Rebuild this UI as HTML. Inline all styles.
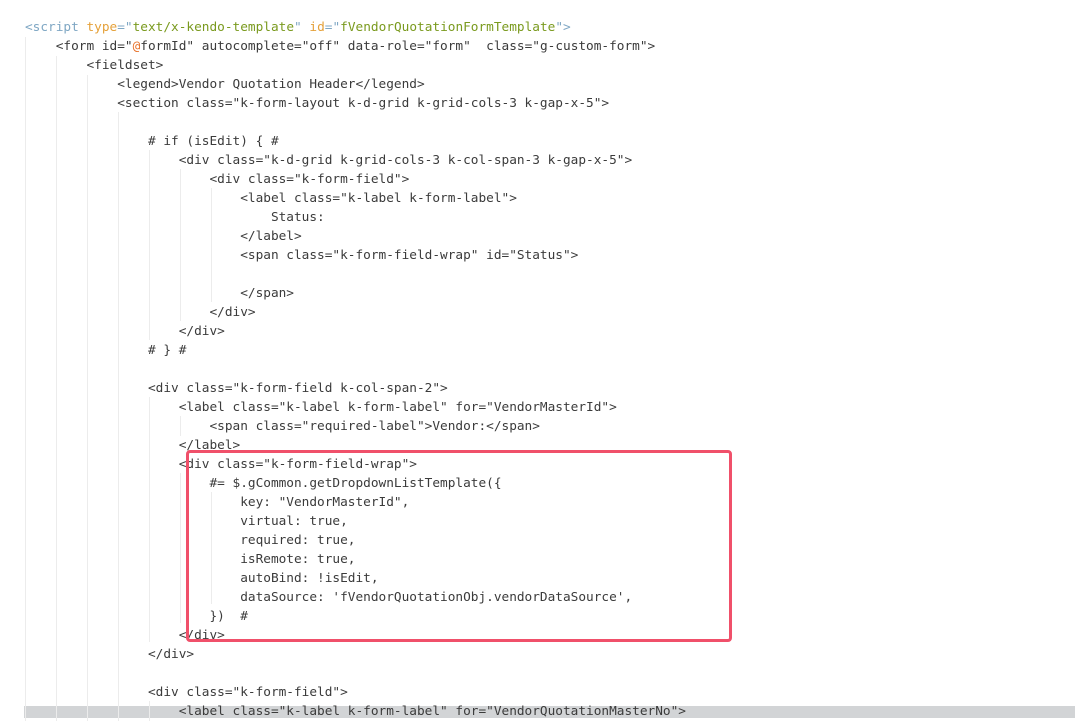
<!DOCTYPE html>
<html><head><style>
body{margin:0;width:1075px;height:721px;background:#fff;overflow:hidden;position:relative;font-family:"DejaVu Sans Mono",monospace;}
pre{position:absolute;left:25px;top:18px;margin:0;font:12.78px/19px "DejaVu Sans Mono","Liberation Mono",monospace;color:#3b3b3b;}
.g{position:absolute;width:1px;background:#ececec;}
.t{color:#7fa7c4}.o{color:#e5a13a}.s{color:#7a9a1e}.r{color:#e8722a}
#hl{position:absolute;left:24px;top:706px;width:1051px;height:12px;background:#d2d4d6;}
#box{position:absolute;left:186px;top:450px;width:540px;height:186px;border:3px solid #f0506a;border-radius:4px;}
</style></head><body>
<div id="hl"></div>
<div class="g" style="left:25px;top:37px;height:684px"></div>
<div class="g" style="left:56px;top:56px;height:665px"></div>
<div class="g" style="left:87px;top:75px;height:646px"></div>
<div class="g" style="left:118px;top:112px;height:609px"></div>
<div class="g" style="left:149px;top:150px;height:190px"></div>
<div class="g" style="left:180px;top:169px;height:152px"></div>
<div class="g" style="left:211px;top:188px;height:114px"></div>
<div class="g" style="left:149px;top:397px;height:245px"></div>
<div class="g" style="left:180px;top:416px;height:20px"></div>
<div class="g" style="left:180px;top:473px;height:150px"></div>
<div class="g" style="left:211px;top:492px;height:112px"></div>
<div class="g" style="left:149px;top:701px;height:20px"></div>
<pre><span class="t">&lt;script</span> <span class="o">type</span><span class="t">="</span><span class="s">text/x-kendo-template</span><span class="t">"</span> <span class="o">id</span><span class="t">="</span><span class="s">fVendorQuotationFormTemplate</span><span class="t">"&gt;</span>
    &lt;form id="<span class="r">@</span>formId" autocomplete="off" data-role="form"  class="g-custom-form"&gt;
        &lt;fieldset&gt;
            &lt;legend&gt;Vendor Quotation Header&lt;/legend&gt;
            &lt;section class="k-form-layout k-d-grid k-grid-cols-3 k-gap-x-5"&gt;

                # if (isEdit) { #
                    &lt;div class="k-d-grid k-grid-cols-3 k-col-span-3 k-gap-x-5"&gt;
                        &lt;div class="k-form-field"&gt;
                            &lt;label class="k-label k-form-label"&gt;
                                Status:
                            &lt;/label&gt;
                            &lt;span class="k-form-field-wrap" id="Status"&gt;

                            &lt;/span&gt;
                        &lt;/div&gt;
                    &lt;/div&gt;
                # } #

                &lt;div class="k-form-field k-col-span-2"&gt;
                    &lt;label class="k-label k-form-label" for="VendorMasterId"&gt;
                        &lt;span class="required-label"&gt;Vendor:&lt;/span&gt;
                    &lt;/label&gt;
                    &lt;div class="k-form-field-wrap"&gt;
                        #= $.gCommon.getDropdownListTemplate({
                            key: "VendorMasterId",
                            virtual: true,
                            required: true,
                            isRemote: true,
                            autoBind: !isEdit,
                            dataSource: 'fVendorQuotationObj.vendorDataSource',
                        })  #
                    &lt;/div&gt;
                &lt;/div&gt;

                &lt;div class="k-form-field"&gt;
                    &lt;label class="k-label k-form-label" for="VendorQuotationMasterNo"&gt;</pre>
<div id="box"></div>
</body></html>
